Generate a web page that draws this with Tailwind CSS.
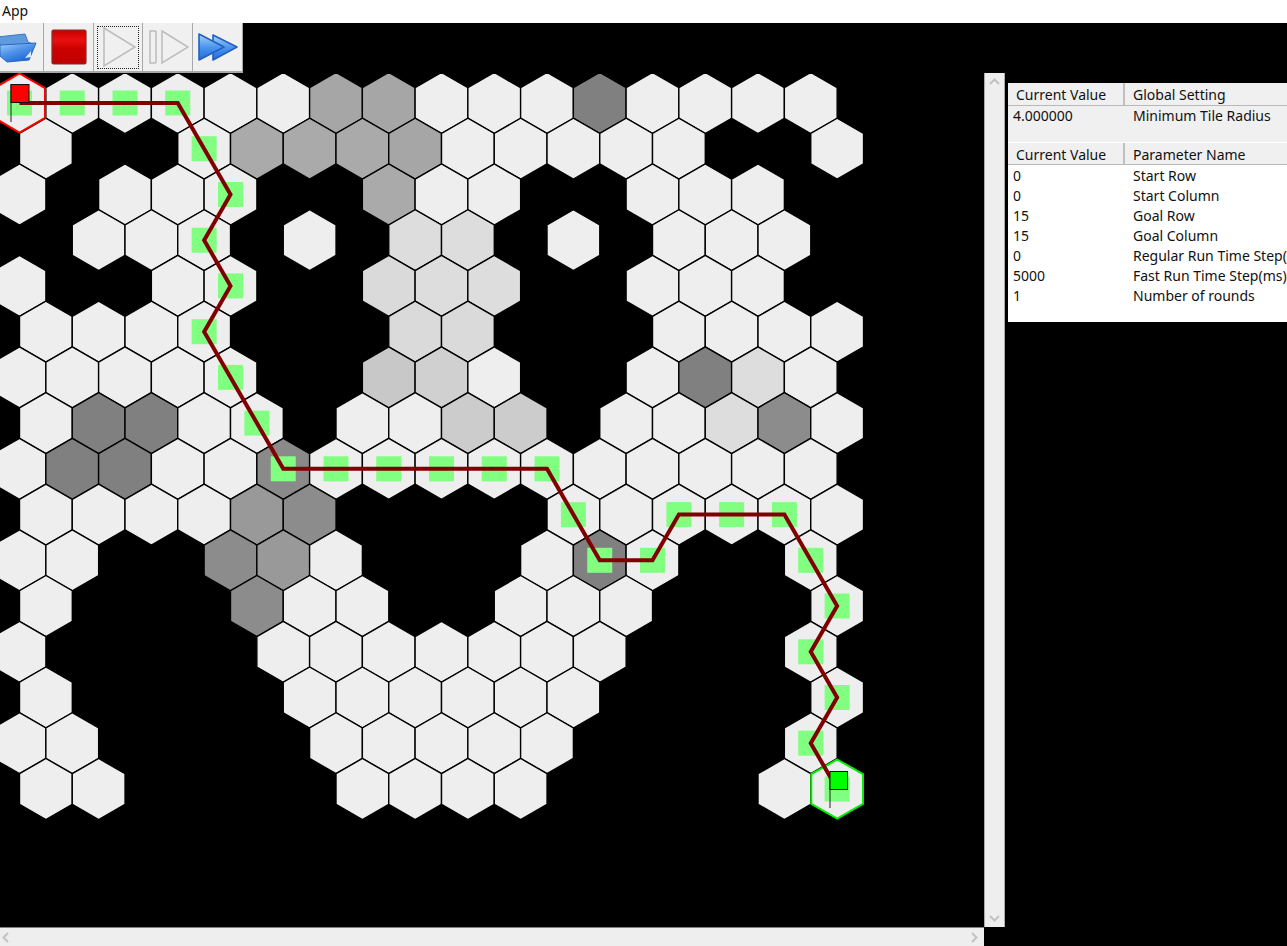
<!DOCTYPE html>
<html>
<head>
<meta charset="utf-8">
<script src="https://cdn.jsdelivr.net/npm/@tailwindcss/browser@4"></script>
</head>
<body class="bg-black overflow-hidden">
<div class="w-[1287px] h-[946px] flex flex-col overflow-hidden bg-black font-['Noto_Sans',sans-serif] text-[14px] text-[#111]">
  <div class="h-[23px] bg-white pl-[2px] leading-[21px] shrink-0">App</div>
  <div class="flex flex-1 min-h-0">
    <div class="w-[1005px] flex flex-col shrink-0">
      <div class="flex h-[50px] w-[243px] shrink-0 bg-[#f0f0f0]">
        <div class="w-[44px] h-full flex justify-end items-center overflow-hidden bg-[#f0f0f0] border-r border-b-2 border-r-[#a8a8a8] border-b-[#a8a8a8]">
          <svg width="44" height="34" viewBox="0 0 44 34" class="shrink-0 mr-[1px]"><defs><linearGradient id="f1" x1="0" y1="0" x2="0.6" y2="1"><stop offset="0" stop-color="#a6cff7"/><stop offset=".5" stop-color="#4f94ea"/><stop offset="1" stop-color="#1e66d0"/></linearGradient></defs><path d="M-1 7 L27 4 L30 12 L35 14 L30 28 L8 30 L-1 20Z" fill="#5f9ae0" stroke="#3d76c4"/><path d="M2 15 L38 13 L31 30 L9 32 L2 26Z" fill="url(#f1)" stroke="#2a66c0"/><path d="M27 28 L33 21 L33 27Z" fill="#d6e8fb"/></svg>
        </div>
        <div class="w-[50px] h-full flex items-center justify-center bg-[#f0f0f0] border-r border-b-2 border-r-[#a8a8a8] border-b-[#a8a8a8]">
          <svg width="36" height="36" viewBox="0 0 36 36"><defs><linearGradient id="r1" x1="0" y1="0" x2="0" y2="1"><stop offset="0" stop-color="#c80000"/><stop offset=".3" stop-color="#e81010"/><stop offset=".55" stop-color="#cc0000"/><stop offset="1" stop-color="#c00000"/></linearGradient></defs><rect x="1" y="1" width="34" height="34" rx="1.5" fill="url(#r1)" stroke="#8a2a2a" stroke-width="1.2"/></svg>
        </div>
        <div class="w-[49px] h-full flex items-center justify-center bg-[#f0f0f0] border-r border-b-2 border-r-[#a8a8a8] border-b-[#a8a8a8]">
          <div class="w-[42px] h-[43px] flex items-center justify-center border border-dotted border-[#222]">
            <svg width="36" height="41" viewBox="0 0 36 41"><path d="M4 1 L35 20 L4 39Z" fill="#f0f0f0" stroke="#bcbcbc" stroke-width="1.5"/></svg>
          </div>
        </div>
        <div class="w-[50px] h-full flex items-center justify-center bg-[#f0f0f0] border-r border-b-2 border-r-[#a8a8a8] border-b-[#a8a8a8]">
          <svg width="42" height="36" viewBox="0 0 42 36"><path d="M9 2 H3 V34 H9 M9 2 V34" fill="#f0f0f0" stroke="#bcbcbc" stroke-width="1.5"/><path d="M15 2 L41 18 L15 34Z" fill="#f0f0f0" stroke="#bcbcbc" stroke-width="1.5"/></svg>
        </div>
        <div class="w-[50px] h-full flex items-center justify-center bg-[#f0f0f0] border-r border-b-2 border-r-[#a8a8a8] border-b-[#a8a8a8]">
          <svg width="42" height="30" viewBox="0 0 42 30"><defs><linearGradient id="b1" x1="0" y1="0" x2="0" y2="1"><stop offset="0" stop-color="#a8d4fa"/><stop offset=".5" stop-color="#4c96ee"/><stop offset="1" stop-color="#1f6bd8"/></linearGradient></defs><path d="M16 3 L40 15 L16 28Z" fill="url(#b1)" stroke="#2460bc" stroke-width="1.6" stroke-linejoin="round"/><path d="M2 2 L27 15 L2 28Z" fill="url(#b1)" stroke="#2460bc" stroke-width="1.6" stroke-linejoin="round"/></svg>
        </div>
      </div>
      <div class="flex flex-1 min-h-0">
        <svg width="984" height="855" viewBox="0 73 984 855" class="block shrink-0 bg-black">
          <defs><polygon id="h" points="0,-30.5 26.4,-15.25 26.4,15.25 0,30.5 -26.4,15.25 -26.4,-15.25" stroke="#000" stroke-width="1.4"/><rect id="s" x="-12.5" y="-12.5" width="25" height="25" fill="#80ff80"/></defs>
          <g fill="#eeeeee">
            <g transform="translate(0,103)"><use href="#h" x="72.25"/><use href="#h" x="125"/><use href="#h" x="177.75"/><use href="#h" x="230.5"/><use href="#h" x="283.25"/><use href="#h" x="336" fill="#a6a6a6"/><use href="#h" x="388.75" fill="#a6a6a6"/><use href="#h" x="441.5"/><use href="#h" x="494.25"/><use href="#h" x="547"/><use href="#h" x="599.75" fill="#808080"/><use href="#h" x="652.5"/><use href="#h" x="705.25"/><use href="#h" x="758"/><use href="#h" x="810.75"/></g>
            <g transform="translate(0,148.7)"><use href="#h" x="45.9"/><use href="#h" x="204.15"/><use href="#h" x="256.9" fill="#aaaaaa"/><use href="#h" x="309.65" fill="#aaaaaa"/><use href="#h" x="362.4" fill="#aaaaaa"/><use href="#h" x="415.15" fill="#a6a6a6"/><use href="#h" x="467.9"/><use href="#h" x="520.65"/><use href="#h" x="573.4"/><use href="#h" x="626.15"/><use href="#h" x="678.9"/><use href="#h" x="837.15"/></g>
            <g transform="translate(0,194.5)"><use href="#h" x="19.5"/><use href="#h" x="125"/><use href="#h" x="177.75"/><use href="#h" x="230.5"/><use href="#h" x="388.75" fill="#aaaaaa"/><use href="#h" x="441.5"/><use href="#h" x="494.25"/><use href="#h" x="652.5"/><use href="#h" x="705.25"/><use href="#h" x="758"/></g>
            <g transform="translate(0,240.2)"><use href="#h" x="98.65"/><use href="#h" x="151.4"/><use href="#h" x="204.15"/><use href="#h" x="309.65"/><use href="#h" x="415.15" fill="#dddddd"/><use href="#h" x="467.9" fill="#dddddd"/><use href="#h" x="573.4"/><use href="#h" x="678.9"/><use href="#h" x="731.65"/><use href="#h" x="784.4"/></g>
            <g transform="translate(0,285.9)"><use href="#h" x="19.5"/><use href="#h" x="177.75"/><use href="#h" x="230.5"/><use href="#h" x="388.75" fill="#dadada"/><use href="#h" x="441.5" fill="#dddddd"/><use href="#h" x="494.25" fill="#dddddd"/><use href="#h" x="652.5"/><use href="#h" x="705.25"/><use href="#h" x="758"/></g>
            <g transform="translate(0,331.7)"><use href="#h" x="45.9"/><use href="#h" x="98.65"/><use href="#h" x="151.4"/><use href="#h" x="204.15"/><use href="#h" x="415.15" fill="#dadada"/><use href="#h" x="467.9" fill="#dadada"/><use href="#h" x="678.9"/><use href="#h" x="731.65"/><use href="#h" x="784.4"/><use href="#h" x="837.15"/></g>
            <g transform="translate(0,377.4)"><use href="#h" x="19.5"/><use href="#h" x="72.25"/><use href="#h" x="125"/><use href="#h" x="177.75"/><use href="#h" x="230.5"/><use href="#h" x="388.75" fill="#c8c8c8"/><use href="#h" x="441.5" fill="#d0d0d0"/><use href="#h" x="494.25"/><use href="#h" x="652.5"/><use href="#h" x="705.25" fill="#808080"/><use href="#h" x="758" fill="#dddddd"/><use href="#h" x="810.75"/></g>
            <g transform="translate(0,423.1)"><use href="#h" x="45.9"/><use href="#h" x="98.65" fill="#808080"/><use href="#h" x="151.4" fill="#808080"/><use href="#h" x="204.15"/><use href="#h" x="256.9"/><use href="#h" x="362.4"/><use href="#h" x="415.15"/><use href="#h" x="467.9" fill="#cccccc"/><use href="#h" x="520.65" fill="#cccccc"/><use href="#h" x="626.15"/><use href="#h" x="678.9"/><use href="#h" x="731.65" fill="#dddddd"/><use href="#h" x="784.4" fill="#8c8c8c"/><use href="#h" x="837.15"/></g>
            <g transform="translate(0,468.8)"><use href="#h" x="19.5"/><use href="#h" x="72.25" fill="#808080"/><use href="#h" x="125" fill="#808080"/><use href="#h" x="177.75"/><use href="#h" x="230.5"/><use href="#h" x="283.25" fill="#8a8a8a"/><use href="#h" x="336"/><use href="#h" x="388.75"/><use href="#h" x="441.5"/><use href="#h" x="494.25"/><use href="#h" x="547"/><use href="#h" x="599.75"/><use href="#h" x="652.5"/><use href="#h" x="705.25"/><use href="#h" x="758"/><use href="#h" x="810.75"/></g>
            <g transform="translate(0,514.6)"><use href="#h" x="45.9"/><use href="#h" x="98.65"/><use href="#h" x="151.4"/><use href="#h" x="204.15"/><use href="#h" x="256.9" fill="#999999"/><use href="#h" x="309.65" fill="#8c8c8c"/><use href="#h" x="573.4"/><use href="#h" x="626.15"/><use href="#h" x="678.9"/><use href="#h" x="731.65"/><use href="#h" x="784.4"/><use href="#h" x="837.15"/></g>
            <g transform="translate(0,560.3)"><use href="#h" x="19.5"/><use href="#h" x="72.25"/><use href="#h" x="230.5" fill="#8c8c8c"/><use href="#h" x="283.25" fill="#999999"/><use href="#h" x="336"/><use href="#h" x="547"/><use href="#h" x="599.75" fill="#808080"/><use href="#h" x="652.5"/><use href="#h" x="810.75"/></g>
            <g transform="translate(0,606)"><use href="#h" x="45.9"/><use href="#h" x="256.9" fill="#8c8c8c"/><use href="#h" x="309.65"/><use href="#h" x="362.4"/><use href="#h" x="520.65"/><use href="#h" x="573.4"/><use href="#h" x="626.15"/><use href="#h" x="837.15"/></g>
            <g transform="translate(0,651.8)"><use href="#h" x="19.5"/><use href="#h" x="283.25"/><use href="#h" x="336"/><use href="#h" x="388.75"/><use href="#h" x="441.5"/><use href="#h" x="494.25"/><use href="#h" x="547"/><use href="#h" x="599.75"/><use href="#h" x="810.75"/></g>
            <g transform="translate(0,697.5)"><use href="#h" x="45.9"/><use href="#h" x="309.65"/><use href="#h" x="362.4"/><use href="#h" x="415.15"/><use href="#h" x="467.9"/><use href="#h" x="520.65"/><use href="#h" x="573.4"/><use href="#h" x="837.15"/></g>
            <g transform="translate(0,743.2)"><use href="#h" x="19.5"/><use href="#h" x="72.25"/><use href="#h" x="336"/><use href="#h" x="388.75"/><use href="#h" x="441.5"/><use href="#h" x="494.25"/><use href="#h" x="547"/><use href="#h" x="810.75"/></g>
            <g transform="translate(0,789)"><use href="#h" x="45.9"/><use href="#h" x="98.65"/><use href="#h" x="362.4"/><use href="#h" x="415.15"/><use href="#h" x="467.9"/><use href="#h" x="520.65"/><use href="#h" x="784.4"/></g>
          </g>
          <polygon points="19.5,73.5 45,88.2 45,117.8 19.5,132.5 -6,117.8 -6,88.2" fill="#eeeeee" stroke="#ff0000" stroke-width="2"/>
          <polygon points="837.15,759.5 863,774.2 863,803.8 837.15,818.5 811.3,803.8 811.3,774.2" fill="#eeeeee" stroke="#00ee00" stroke-width="2"/>
          <use href="#s" x="19.5" y="103"/><use href="#s" x="72.25" y="103"/><use href="#s" x="125" y="103"/><use href="#s" x="177.75" y="103"/>
          <use href="#s" x="204.15" y="148.7"/><use href="#s" x="230.5" y="194.5"/><use href="#s" x="204.15" y="240.2"/><use href="#s" x="230.5" y="285.9"/><use href="#s" x="204.15" y="331.7"/><use href="#s" x="230.5" y="377.4"/><use href="#s" x="256.9" y="423.1"/>
          <use href="#s" x="283.25" y="468.8"/><use href="#s" x="336" y="468.8"/><use href="#s" x="388.75" y="468.8"/><use href="#s" x="441.5" y="468.8"/><use href="#s" x="494.25" y="468.8"/><use href="#s" x="547" y="468.8"/>
          <use href="#s" x="573.4" y="514.6"/><use href="#s" x="599.75" y="560.3"/><use href="#s" x="652.5" y="560.3"/><use href="#s" x="678.9" y="514.6"/><use href="#s" x="731.65" y="514.6"/><use href="#s" x="784.4" y="514.6"/>
          <use href="#s" x="810.75" y="560.3"/><use href="#s" x="837.15" y="606"/><use href="#s" x="810.75" y="651.8"/><use href="#s" x="837.15" y="697.5"/><use href="#s" x="810.75" y="743.2"/><use href="#s" x="837.15" y="789"/>
          <polyline points="19.5,103 177.75,103 230.5,194.5 204.15,240.2 230.5,285.9 204.15,331.7 283.25,468.8 547,468.8 599.75,560.3 652.5,560.3 678.9,514.6 784.4,514.6 837.15,606 810.75,651.8 837.15,697.5 810.75,743.2 837.15,789" fill="none" stroke="#800000" stroke-width="4"/>
          <path d="M11 84.5 V122" stroke="#222" stroke-width="1"/><rect x="11" y="84.5" width="18" height="18" fill="#ff0000" stroke="#111" stroke-width="1"/>
          <path d="M830 771.5 V808" stroke="#222" stroke-width="1"/><rect x="830" y="771.5" width="17.5" height="18" fill="#00ff00" stroke="#111" stroke-width="1"/>
        </svg>
        <div class="w-[21px] flex flex-col justify-between items-center bg-[#eeeeee] border-x border-[#aaaaaa] py-[4px]">
          <svg width="11" height="9" viewBox="0 0 11 9"><path d="M1 7 L5.5 2.5 L10 7" fill="none" stroke="#c2c2c2" stroke-width="2"/></svg>
          <svg width="11" height="9" viewBox="0 0 11 9"><path d="M1 2 L5.5 6.5 L10 2" fill="none" stroke="#c2c2c2" stroke-width="2"/></svg>
        </div>
      </div>
      <div class="h-[19px] w-[984px] shrink-0 flex justify-between items-center bg-[#eeeeee] border-t border-[#808080] px-[1px]">
        <svg width="10" height="11" viewBox="0 0 10 11"><path d="M7 1 L2.5 5.5 L7 10" fill="none" stroke="#c2c2c2" stroke-width="2"/></svg>
        <svg width="10" height="11" viewBox="0 0 10 11" class="mr-[4px]"><path d="M3 1 L7.5 5.5 L3 10" fill="none" stroke="#c2c2c2" stroke-width="2"/></svg>
      </div>
    </div>
    <div class="w-[279px] ml-[3px] mt-[60px] h-[239px] shrink-0 overflow-hidden bg-white flex flex-col leading-[20px] whitespace-nowrap">
      <div class="flex h-[23px] bg-[#f0f0f0] border-b border-[#b8b8b8]">
        <div class="w-[117px] pl-[8px] border-r-2 border-[#c0c0c0] shrink-0 pt-[2px]">Current Value</div>
        <div class="pl-[8px] pt-[2px]">Global Setting</div>
      </div>
      <div class="flex h-[37px] bg-[#f0f0f0] border-b border-white">
        <div class="w-[125px] pl-[5px] shrink-0">4.000000</div>
        <div>Minimum Tile Radius</div>
      </div>
      <div class="flex h-[22px] bg-[#f0f0f0] border-b border-[#b8b8b8]">
        <div class="w-[117px] pl-[8px] border-r-2 border-[#c0c0c0] shrink-0 pt-[2px]">Current Value</div>
        <div class="pl-[8px] pt-[2px]">Parameter Name</div>
      </div>
      <div class="grid grid-cols-[125px_1fr] pt-[1px] [&>div:nth-child(odd)]:pl-[5px]">
        <div>0</div><div>Start Row</div>
        <div>0</div><div>Start Column</div>
        <div>15</div><div>Goal Row</div>
        <div>15</div><div>Goal Column</div>
        <div>0</div><div>Regular Run Time Step(ms)</div>
        <div>5000</div><div>Fast Run Time Step(ms)</div>
        <div>1</div><div>Number of rounds</div>
      </div>
    </div>
  </div>
</div>
</body>
</html>
